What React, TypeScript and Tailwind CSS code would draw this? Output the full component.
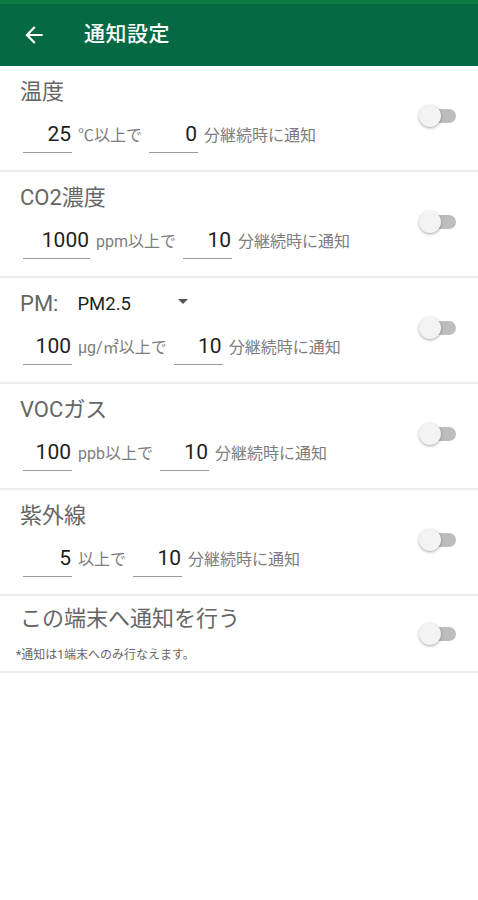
import React from "react";

const font = "font-['Roboto','Noto_Sans_CJK_JP',sans-serif]";

// toggle switch (off state)
const Toggle = () => (
  <div className="relative w-[37px] h-[22px] shrink-0">
    <div className="absolute right-0 top-[4px] w-[34px] h-[14px] rounded-full bg-[#bdbdbd]" />
    <div className="absolute left-0 top-0 w-[22px] h-[22px] rounded-full bg-[#f3f3f3] shadow-[0_1px_3px_rgba(0,0,0,0.35)]" />
  </div>
);

const NumInput = ({ value, width }: { value: string; width: string }) => (
  <div
    className={`${width} border-b-[1.5px] border-[#9a9a9a] text-right text-[21px] leading-[24px] pt-[6px] pb-[6px] pr-[1px] text-[#1e1e1e]`}
  >
    {value}
  </div>
);

const Unit = ({ text, last }: { text: string; last?: boolean }) => (
  <span
    className={`text-[16px] leading-[20px] pb-[7px] text-[#7d7d7d] ml-[6px] ${last ? "" : "mr-[7px]"}`}
  >
    {text}
  </span>
);

interface Row {
  title: React.ReactNode;
  value: string;
  valueWidth: string;
  unit: string;
  minutes: string;
}

const rows: Row[] = [
  { title: "温度", value: "25", valueWidth: "w-[49px]", unit: "℃以上で", minutes: "0" },
  { title: "CO2濃度", value: "1000", valueWidth: "w-[67px]", unit: "ppm以上で", minutes: "10" },
  {
    title: (
      <div className="flex items-center">
        <span>PM:</span>
        <span className="ml-[19px] text-[18.5px] text-[#1e1e1e]">PM2.5</span>
        <svg width="10" height="6" viewBox="0 0 10 6" className="ml-[47px] mb-[4px]">
          <path d="M0 0h10L5 5z" fill="#555" />
        </svg>
      </div>
    ),
    value: "100",
    valueWidth: "w-[49px]",
    unit: "μg/㎡以上で",
    minutes: "10",
  },
  { title: "VOCガス", value: "100", valueWidth: "w-[49px]", unit: "ppb以上で", minutes: "10" },
  { title: "紫外線", value: "5", valueWidth: "w-[49px]", unit: "以上で", minutes: "10" },
];

export default function App() {
  return (
    <div className={`w-[478px] min-h-[900px] bg-white ${font}`}>
      {/* app bar */}
      <div className="bg-[#056a43]">
        <div className="h-[4px] bg-[#0d7a3b]" />
        <div className="h-[62px] flex items-center">
          <svg width="26" height="26" viewBox="0 0 24 24" className="ml-[21px]">
            <path
              d="M20 11H7.83l5.59-5.59L12 4l-8 8 8 8 1.41-1.41L7.83 13H20v-2z"
              fill="#fff"
            />
          </svg>
          <span className="ml-[37px] text-white text-[21px] font-medium tracking-[0.5px]">
            通知設定
          </span>
        </div>
      </div>

      {rows.map((r, i) => (
        <div
          key={i}
          className="flex items-center border-b-[2px] border-[#ececec] pl-[20px] pr-[22px] pt-[12px] pb-[17px]"
        >
          <div className="flex-1">
            <div className="text-[22px] leading-[28px] text-[#666]">{r.title}</div>
            <div className="flex items-end mt-[10px] ml-[3px]">
              <NumInput value={r.value} width={r.valueWidth} />
              <Unit text={r.unit} />
              <NumInput value={r.minutes} width="w-[49px]" />
              <Unit text="分継続時に通知" last />
            </div>
          </div>
          <Toggle />
        </div>
      ))}

      {/* this device */}
      <div className="flex items-center border-b-[2px] border-[#ececec] pl-[20px] pr-[22px] pt-[9px] pb-[8px]">
        <div className="flex-1">
          <div className="text-[22px] leading-[28px] text-[#666]">この端末へ通知を行う</div>
          <div className="mt-[14px] text-[12px] leading-[16px] text-[#666] -ml-[4px]">
            *通知は1端末へのみ行なえます。
          </div>
        </div>
        <Toggle />
      </div>
    </div>
  );
}
